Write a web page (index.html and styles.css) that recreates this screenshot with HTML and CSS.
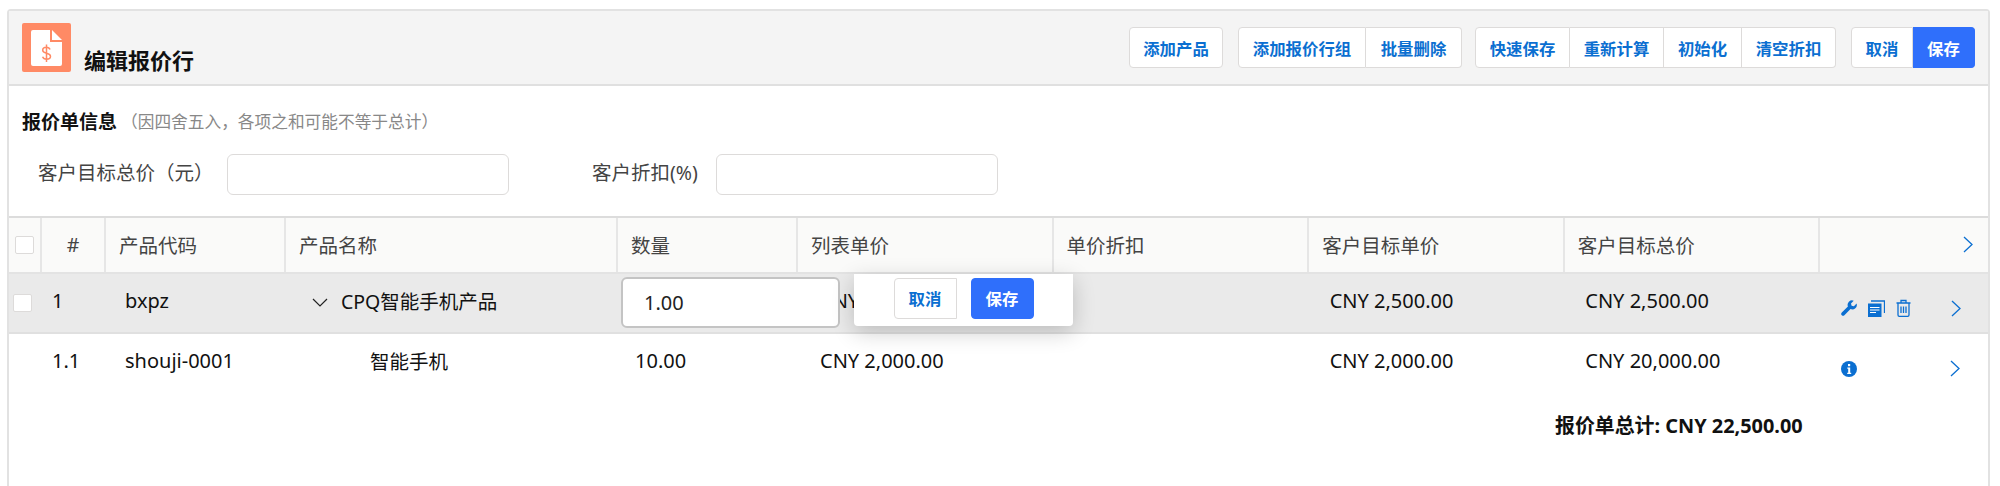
FILE: index.html
```html
<!DOCTYPE html>
<html lang="zh-CN">
<head>
    <meta charset="UTF-8">
    <title>编辑报价行</title>
    <link rel="stylesheet" href="styles.css">
</head>
<body>
    <div class="card">
        <div class="card-header">
            <div class="title-wrap">
                <span class="title-icon">
                    <svg width="49" height="49" viewBox="0 0 49 49">
                        <path d="M11 7h17v12h12v22a2 2 0 0 1-2 2H11a2 2 0 0 1-2-2V9a2 2 0 0 1 2-2z" fill="#fff"/>
                        <path d="M30 7l10 10H30z" fill="#fff"/>
                        <path d="M28 26.500c-.6-1.500-1.900-2.200-3.600-2.200-2.200 0-3.700 1.100-3.700 2.900 0 4 7.800 2 7.800 6 0 1.800-1.600 3-3.900 3-1.900 0-3.400-.9-4-2.500M24.500 21.500v17.500" fill="none" stroke="#ff8a65" stroke-width="1.500"/>
                    </svg>
                </span>
                <h1>编辑报价行</h1>
            </div>
            <div class="actions">
                <div class="btn-group"><button class="btn w94">添加产品</button></div>
                <div class="btn-group tight"><button class="btn w128">添加报价行组</button><button class="btn w96">批量删除</button></div>
                <div class="btn-group"><button class="btn w95">快速保存</button><button class="btn w94">重新计算</button><button class="btn w78">初始化</button><button class="btn w94">清空折扣</button></div>
                <div class="btn-group"><button class="btn w62">取消</button><button class="btn btn-brand w62">保存</button></div>
            </div>
        </div>

        <div class="info">
            <div class="info-title"><strong>报价单信息</strong><span class="hint">（因四舍五入，各项之和可能不等于总计）</span></div>
            <div class="form-row">
                <label class="label-a">客户目标总价（元）</label>
                <input class="form-input" type="text">
                <label class="label-b">客户折扣(%)</label>
                <input class="form-input" type="text">
            </div>
        </div>

        <table class="lines">
            <colgroup>
                <col class="c-check"><col class="c-num"><col class="c-code"><col class="c-name"><col class="c-qty">
                <col class="c-price"><col class="c-price"><col class="c-price"><col class="c-price"><col class="c-act">
            </colgroup>
            <thead>
                <tr>
                    <th class="check-cell"><span class="checkbox"></span></th>
                    <th class="center">#</th>
                    <th>产品代码</th>
                    <th>产品名称</th>
                    <th>数量</th>
                    <th>列表单价</th>
                    <th>单价折扣</th>
                    <th>客户目标单价</th>
                    <th>客户目标总价</th>
                    <th class="head-act">
                        <svg class="chev" width="10" height="17" viewBox="0 0 10 17"><path d="M1 1l8 7.500-8 7.500" fill="none" stroke="#0b6fd1" stroke-width="1.300"/></svg>
                    </th>
                </tr>
            </thead>
            <tbody>
                <tr class="row-group">
                    <td class="check-cell"><span class="checkbox"></span></td>
                    <td class="num">1</td>
                    <td class="code">bxpz</td>
                    <td class="name">
                        <svg class="expand" width="16" height="9" viewBox="0 0 16 9"><path d="M1 1l7 7 7-7" fill="none" stroke="#222" stroke-width="1.200"/></svg>CPQ智能手机产品
                    </td>
                    <td class="qty-cell">
                        <input class="qty-input" type="text" value="1.00">
                        <div class="popover">
                            <button class="btn pop-btn">取消</button>
                            <button class="btn btn-brand pop-btn">保存</button>
                        </div>
                    </td>
                    <td class="price">CNY 2,500.00</td>
                    <td></td>
                    <td class="price far">CNY 2,500.00</td>
                    <td class="price far">CNY 2,500.00</td>
                    <td class="act-cell">
                        <div class="row-acts">
                            <svg width="16" height="16" viewBox="0 0 16 16"><path fill="#0b6fd1" d="M15.600 3.600l-2.700 2.700-2.300-.6-.6-2.300L12.700.7A4.500 4.500 0 0 0 6.900 6.500L.8 12.600a1.800 1.800 0 0 0 2.600 2.600l6.100-6.100a4.500 4.500 0 0 0 6.100-5.500z"/></svg>
                            <svg class="ic-copy" width="17" height="17" viewBox="0 0 17 17"><path d="M0 3.500h13.500V17H0z" fill="#0b6fd1"/><path d="M2 7.500h9.500M2 10h9.500M2 12.500h6" stroke="#fff" stroke-width="1.100"/><path d="M3 1h13.500v12" fill="none" stroke="#0b6fd1" stroke-width="1.300"/></svg>
                            <svg class="ic-trash" width="15" height="18" viewBox="0 0 15 18"><path d="M.5 4h14M5 4V1.500h5V4M2 4v12a1.300 1.300 0 0 0 1.300 1.300h8.400A1.300 1.300 0 0 0 13 16V4M5 7.500v6.500M7.500 7.500v6.500M10 7.500v6.500" fill="none" stroke="#0b6fd1" stroke-width="1.300"/></svg>
                            <svg class="chev" width="10" height="17" viewBox="0 0 10 17"><path d="M1 1l8 7.500-8 7.500" fill="none" stroke="#0b6fd1" stroke-width="1.300"/></svg>
                        </div>
                    </td>
                </tr>
                <tr>
                    <td></td>
                    <td class="num">1.1</td>
                    <td class="code">shouji-0001</td>
                    <td class="name name-child">智能手机</td>
                    <td class="qty">10.00</td>
                    <td class="price">CNY 2,000.00</td>
                    <td></td>
                    <td class="price far">CNY 2,000.00</td>
                    <td class="price far">CNY 20,000.00</td>
                    <td class="act-cell">
                        <div class="row-acts">
                            <svg width="16" height="16" viewBox="0 0 16 16"><circle cx="8" cy="8" r="8" fill="#0b6fd1"/><rect x="7" y="3" width="2.200" height="2.200" fill="#fff"/><path d="M6.300 6.600h2.900v5.200h1v1.200H6.200v-1.200h1V7.800h-.9z" fill="#fff"/></svg>
                            <span class="spacer"></span>
                            <svg class="chev" width="10" height="17" viewBox="0 0 10 17"><path d="M1 1l8 7.500-8 7.500" fill="none" stroke="#0b6fd1" stroke-width="1.300"/></svg>
                        </div>
                    </td>
                </tr>
            </tbody>
        </table>

        <div class="total">报价单总计: CNY 22,500.00</div>
    </div>
</body>
</html>
```

FILE: styles.css
```css
* {
    box-sizing: border-box;
}

html, body {
    height: 100%;
}

body {
    margin: 0;
    padding: 9px 10px 0 7px;
    overflow: hidden;
    background-color: white;
    color: #111;
    font-family: "Noto Sans", "Noto Sans CJK SC", sans-serif;
    font-size: 19.5px;
}

button, input {
    font-family: inherit;
}

.card {
    min-height: 500px;
    border: 2px solid #e2e2e2;
    border-bottom: none;
    border-radius: 4px 4px 0 0;
}

/* header */
.card-header {
    display: flex;
    justify-content: space-between;
    height: 75px;
    padding: 16px 13px 0 13px;
    background-color: #f4f4f4;
    border-bottom: 2px solid #e0e0e0;
}

.title-wrap {
    display: flex;
    align-items: flex-start;
    gap: 13px;
    margin-top: -4px;
}

.title-icon {
    display: block;
    width: 49px;
    height: 49px;
    background-color: #ff8a65;
    border-radius: 2px;
}

h1 {
    margin: 22px 0 0 0;
    font-size: 22px;
    line-height: 30px;
    font-weight: 700;
}

.actions {
    display: flex;
    gap: 15px;
}

.btn-group {
    display: flex;
    height: 41px;
}

.btn-group.tight {
    margin-right: -2px;
}

.btn {
    height: 41px;
    padding: 0;
    background-color: white;
    border: 1px solid #dddbda;
    border-left: none;
    color: #0b6fd1;
    font-size: 16.4px;
    font-weight: 700;
}

.btn:first-child {
    border-left: 1px solid #dddbda;
    border-radius: 4px 0 0 4px;
}

.btn:last-child {
    border-radius: 0 4px 4px 0;
}

.btn:only-child {
    border-radius: 4px;
}

.btn-brand {
    background-color: #2f6ffb;
    border-color: #2f6ffb;
    color: white;
}

.w62 { width: 62px; }
.w78 { width: 78px; }
.w94 { width: 94px; }
.w95 { width: 95px; }
.w96 { width: 96px; }
.w128 { width: 128px; }

/* quote info */
.info {
    height: 130px;
    padding: 21px 13px 0 13px;
}

.info-title {
    display: flex;
    align-items: center;
    height: 27px;
}

.info-title strong {
    font-size: 19px;
}

.hint {
    margin-left: 4px;
    color: #888;
    font-size: 16.7px;
}

.form-row {
    display: flex;
    align-items: center;
    margin-top: 20px;
}

.form-row label {
    margin-bottom: 6px;
    font-size: 19.5px;
    color: #444;
}

.label-a {
    width: 205px;
    padding-left: 16px;
}

.label-b {
    width: 124px;
    margin-left: 83px;
}

.form-input {
    width: 282px;
    height: 41px;
    background-color: white;
    border: 1px solid #dddbda;
    border-radius: 6px;
}

/* lines table */
.lines {
    width: 100%;
    table-layout: fixed;
    border-collapse: collapse;
}

.c-check { width: 32px; }
.c-num { width: 64px; }
.c-code { width: 180px; }
.c-name { width: 332px; }
.c-qty { width: 180px; }
.c-price { width: 255.6px; }
.c-act { width: auto; }

.lines th {
    height: 56px;
    padding: 0 0 2px 13px;
    background-color: #fafaf9;
    border-top: 2px solid #dcdcdc;
    border-bottom: 2px solid #e3e3e3;
    border-left: 2px solid #e6e6e6;
    color: #444;
    font-weight: 400;
    text-align: left;
}

.lines th:first-child {
    border-left: none;
}

.lines th.center {
    padding: 0 0 2px 0;
    text-align: center;
}

.lines th.check-cell {
    padding: 0 0 0 6px;
}

.lines th.head-act {
    padding: 0 15px 0 0;
    text-align: right;
}

.lines td {
    height: 60px;
    padding: 0 0 6px 13px;
    vertical-align: middle;
}

.lines td.check-cell {
    padding: 0 0 0 4px;
}

.row-group td {
    background-color: #eaeaea;
    border-bottom: 2px solid #e0e0e0;
}

.checkbox {
    display: block;
    width: 19px;
    height: 18px;
    background-color: white;
    border: 1px solid #dddbda;
    border-radius: 2px;
}

.lines td.num {
    padding-left: 11px;
    font-size: 20px;
}

.lines td.code {
    padding-left: 20px;
    font-size: 20px;
}

.lines td.name {
    padding-left: 27px;
    white-space: nowrap;
}

.expand {
    margin-right: 13px;
    vertical-align: 2px;
}

.lines td.name-child {
    padding-left: 85px;
}

.lines td.qty {
    padding-left: 18px;
    font-size: 20px;
}

.lines td.price {
    padding-left: 23px;
    font-size: 20px;
}

.lines td.far {
    padding-left: 21.5px;
}

/* inline edit over the row */
.qty-cell {
    position: relative;
}

.qty-input {
    position: absolute;
    top: 3px;
    left: 4px;
    z-index: 2;
    width: 219px;
    height: 51px;
    padding-left: 21px;
    background-color: white;
    border: 2px solid #c4c4c4;
    border-radius: 6px;
    color: #222;
    font-size: 20px;
}

.popover {
    position: absolute;
    top: 0;
    left: 237px;
    z-index: 3;
    display: flex;
    justify-content: center;
    align-items: center;
    gap: 14px;
    width: 219px;
    height: 52px;
    padding-bottom: 4px;
    background-color: white;
    border-radius: 0 0 4px 4px;
    box-shadow: 0 6px 22px rgba(0, 0, 0, 0.2);
}

.pop-btn {
    width: 63px;
    height: 41px;
    border: 1px solid #dddbda;
    border-radius: 4px;
}

.pop-btn.btn-brand {
    border-color: #2f6ffb;
    border-radius: 4px;
}

.act-cell {
    overflow: hidden;
}

.row-acts {
    display: flex;
    align-items: center;
    height: 17px;
    margin: 16px 0 0 9px;
}

.ic-copy {
    margin-left: 11px;
}

.ic-trash {
    margin-left: 11px;
}

.row-acts .chev {
    margin-left: 40px;
}

.spacer {
    width: 53px;
}

.total {
    margin: 17px 0 0 1546px;
    font-weight: 700;
    font-size: 19.9px;
    white-space: nowrap;
}
```
